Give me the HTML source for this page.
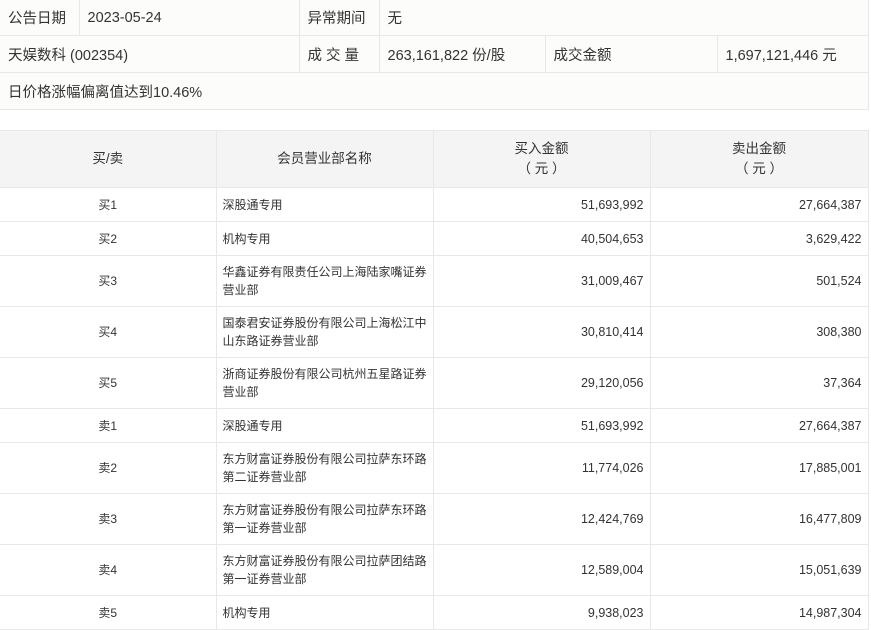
<!DOCTYPE html>
<html><head><meta charset="utf-8"><style>
*{margin:0;padding:0;box-sizing:border-box}
body{width:871px;height:629px;overflow:hidden;background:#fff;font-family:"Liberation Sans","Noto Sans CJK SC",sans-serif;color:#333}
table{border-collapse:collapse;table-layout:fixed;position:absolute;left:0}
td{border:1px solid #e8e8e8}
#t1{top:-1px;width:868px;background:#fcfcfa;font-size:14.5px}
#t1 td{height:37px;padding-left:8px}
#t1 tr:first-child td{height:36px}
#t2{top:130px;width:868px;font-size:12px}
#t2 td{padding:0 6px;line-height:18px}
#t2 tr.h td{background:#f4f4f4;height:57px;text-align:center;font-size:13.5px;line-height:20px}
.c{text-align:center}.r{text-align:right;font-size:12.5px}
td:first-child{border-left:none}
</style></head><body>
<table id="t1">
<colgroup><col style="width:79px"><col style="width:220px"><col style="width:80px"><col style="width:166px"><col style="width:172px"><col style="width:151px"></colgroup>
<tr><td>公告日期</td><td>2023-05-24</td><td>异常期间</td><td colspan="3">无</td></tr>
<tr><td colspan="2">天娱数科 (002354)</td><td>成 交 量</td><td>263,161,822 份/股</td><td>成交金额</td><td>1,697,121,446 元</td></tr>
<tr><td colspan="6">日价格涨幅偏离值达到10.46%</td></tr>
</table>
<table id="t2">
<colgroup><col style="width:216px"><col style="width:217px"><col style="width:217px"><col style="width:218px"></colgroup>
<tr class="h"><td>买/卖</td><td>会员营业部名称</td><td>买入金额<br>（ 元 ）</td><td>卖出金额<br>（ 元 ）</td></tr>
<tr style="height:34px"><td class="c">买1</td><td>深股通专用</td><td class="r">51,693,992</td><td class="r">27,664,387</td></tr>
<tr style="height:34px"><td class="c">买2</td><td>机构专用</td><td class="r">40,504,653</td><td class="r">3,629,422</td></tr>
<tr style="height:51px"><td class="c">买3</td><td>华鑫证券有限责任公司上海陆家嘴证券营业部</td><td class="r">31,009,467</td><td class="r">501,524</td></tr>
<tr style="height:51px"><td class="c">买4</td><td>国泰君安证券股份有限公司上海松江中山东路证券营业部</td><td class="r">30,810,414</td><td class="r">308,380</td></tr>
<tr style="height:51px"><td class="c">买5</td><td>浙商证券股份有限公司杭州五星路证券营业部</td><td class="r">29,120,056</td><td class="r">37,364</td></tr>
<tr style="height:34px"><td class="c">卖1</td><td>深股通专用</td><td class="r">51,693,992</td><td class="r">27,664,387</td></tr>
<tr style="height:51px"><td class="c">卖2</td><td>东方财富证券股份有限公司拉萨东环路第二证券营业部</td><td class="r">11,774,026</td><td class="r">17,885,001</td></tr>
<tr style="height:51px"><td class="c">卖3</td><td>东方财富证券股份有限公司拉萨东环路第一证券营业部</td><td class="r">12,424,769</td><td class="r">16,477,809</td></tr>
<tr style="height:51px"><td class="c">卖4</td><td>东方财富证券股份有限公司拉萨团结路第一证券营业部</td><td class="r">12,589,004</td><td class="r">15,051,639</td></tr>
<tr style="height:34px"><td class="c">卖5</td><td>机构专用</td><td class="r">9,938,023</td><td class="r">14,987,304</td></tr>
</table>
</body></html>
